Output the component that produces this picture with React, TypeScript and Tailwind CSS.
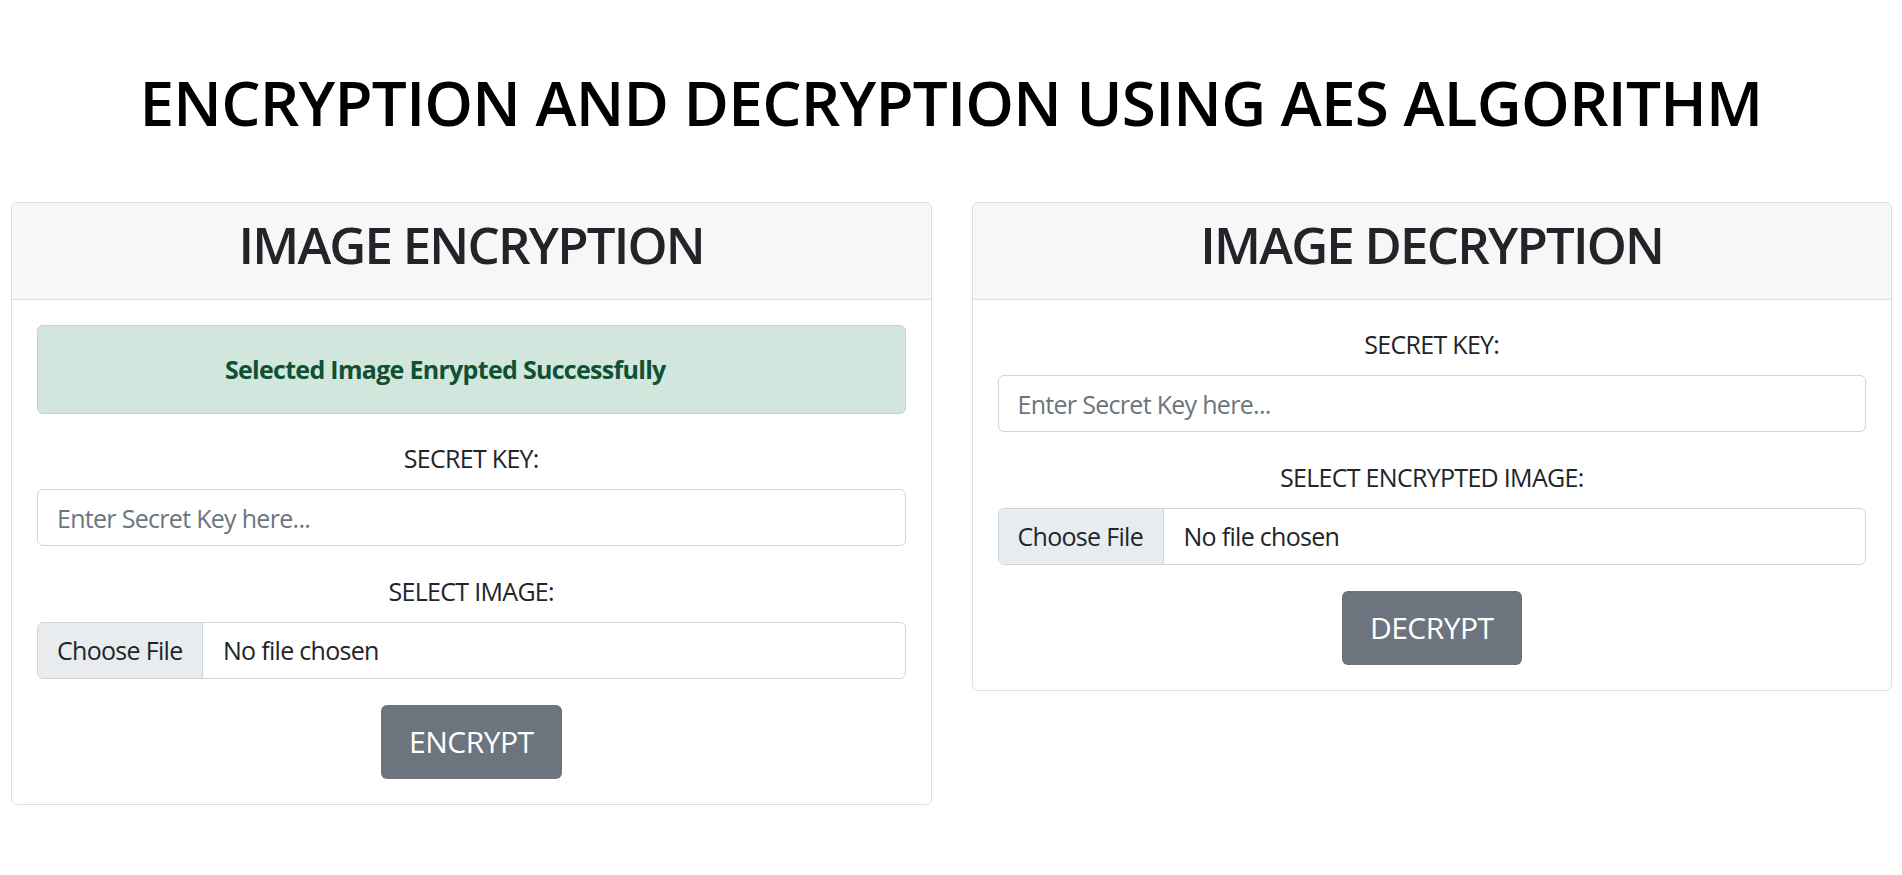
import React from "react";

const Label = ({ children }: { children: string }) => (
  <div className="pt-[7px] pb-[18px] text-center text-[25px] leading-none text-[#212529]">
    {children}
  </div>
);

const KeyInput = () => (
  <input
    type="text"
    placeholder="Enter Secret Key here..."
    className="block h-[57px] w-full rounded-[6px] border border-[#ced4da] bg-white pl-[19px] text-[25px] leading-none tracking-[-0.7px] text-[#212529] outline-none placeholder:text-[#6c757d]"
  />
);

const FileInput = () => (
  <div className="flex h-[57px] w-full items-center overflow-hidden rounded-[6px] border border-[#ced4da] bg-white text-[25px] leading-none text-[#212529]">
    <span className="flex h-full w-[165px] shrink-0 items-center border-r border-[#ced4da] bg-[#e9ecef] pl-[19px]">
      Choose File
    </span>
    <span className="pl-[20px]">No file chosen</span>
  </div>
);

const Card = ({ title, children }: { title: string; children: React.ReactNode }) => (
  <div className="overflow-hidden rounded-[6px] border border-[#dfdfdf] bg-white">
    <div className="border-b border-[#dfdfdf] bg-[#f7f7f7] pt-[16px] pb-[29px] text-center text-[51px] leading-none font-semibold tracking-[-1.8px] text-[#212529]">
      {title}
    </div>
    <div className="p-[25px]">{children}</div>
  </div>
);

const SubmitButton = ({ children }: { children: string }) => (
  <div className="mt-[26px] flex justify-center">
    <button className="flex h-[74px] items-center rounded-[6px] bg-[#6c757d] px-[28px] text-[30px] leading-none tracking-[-0.5px] text-white">
      {children}
    </button>
  </div>
);

export default function App() {
  return (
    <div className="min-h-screen bg-white font-['Open_Sans',sans-serif] tracking-[-0.7px]">
      <h1 className="pt-[71px] text-center text-[62px] leading-none font-semibold tracking-[-0.75px] text-black">
        ENCRYPTION AND DECRYPTION USING AES ALGORITHM
      </h1>

      <div className="mt-[69px] grid grid-cols-2 items-start gap-[40px] pl-[11px] pr-[10px]">
        <Card title="IMAGE ENCRYPTION">
          <div className="mb-[25px] flex h-[89px] items-center justify-center rounded-[6px] border border-[#badbcc] bg-[#d1e7dd] pr-[52px] text-[25px] leading-none font-bold tracking-[-0.7px] text-[#0f5132]">
            Selected Image Enrypted Successfully
          </div>
          <Label>SECRET KEY:</Label>
          <KeyInput />
          <div className="mt-[26px]">
            <Label>SELECT IMAGE:</Label>
            <FileInput />
          </div>
          <SubmitButton>ENCRYPT</SubmitButton>
        </Card>

        <Card title="IMAGE DECRYPTION">
          <Label>SECRET KEY:</Label>
          <KeyInput />
          <div className="mt-[26px]">
            <Label>SELECT ENCRYPTED IMAGE:</Label>
            <FileInput />
          </div>
          <SubmitButton>DECRYPT</SubmitButton>
        </Card>
      </div>
    </div>
  );
}
